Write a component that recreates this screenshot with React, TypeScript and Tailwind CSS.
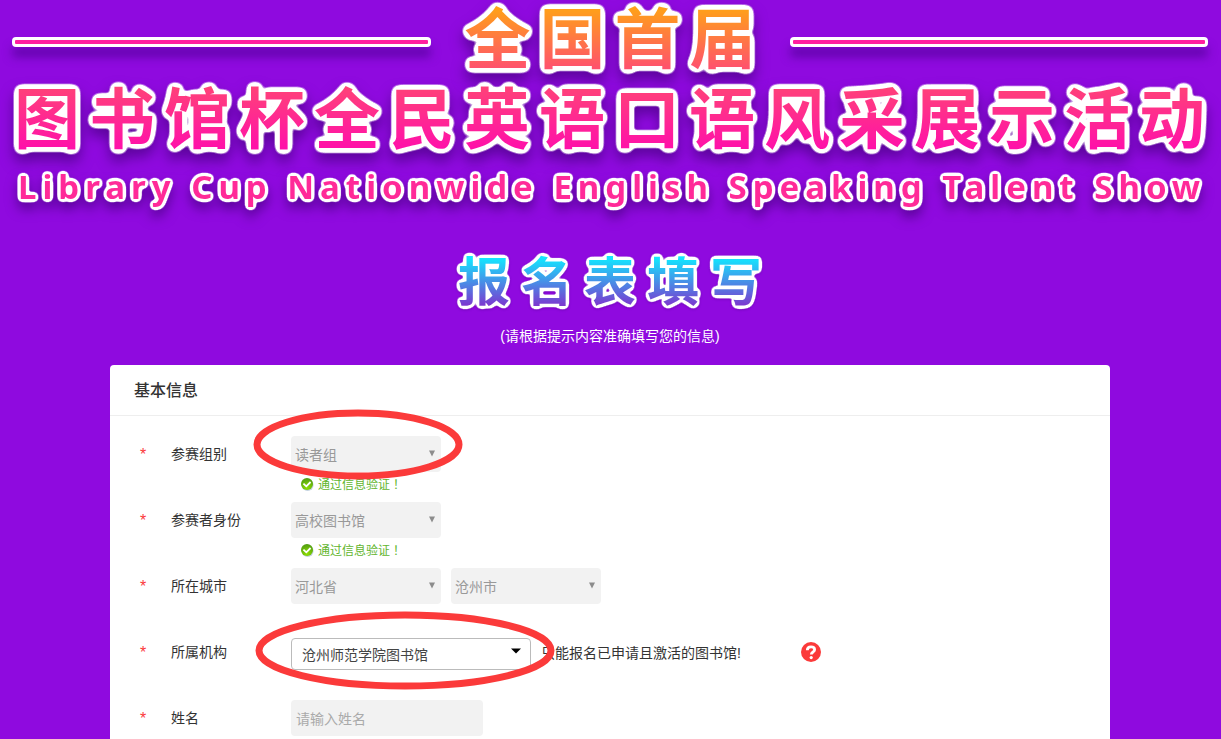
import React, { useState } from 'react';

interface FieldRowProps {
    id: string;
    label: string;
    message?: string;
    children: React.ReactNode;
}

interface LockedSelectProps {
    id: string;
    value: string;
    label?: string;
}

interface EllipseMarkProps {
    className: string;
    width: number;
    height: number;
}

interface OutlineFilterProps {
    id: string;
    spread: number;
    shadow: number;
    shadowOpacity: number;
}

// White outline: blur the glyph shape, then harden the edge far out
const OutlineFilter: React.FC<OutlineFilterProps> = ({ id, spread, shadow, shadowOpacity }) => (
    <filter id={id} x="-5%" y="-30%" width="110%" height="170%" colorInterpolationFilters="sRGB">
        <feGaussianBlur in="SourceAlpha" stdDeviation={spread} result="soft" />
        <feComponentTransfer in="soft" result="grown">
            <feFuncA type="linear" slope="16" intercept="-0.4" />
        </feComponentTransfer>
        <feFlood floodColor="#fff" />
        <feComposite in2="grown" operator="in" result="outline" />
        <feOffset in="grown" dy={shadow} />
        <feGaussianBlur stdDeviation={shadow * 0.8} result="shade" />
        <feFlood floodColor="#3a0070" floodOpacity={shadowOpacity} />
        <feComposite in2="shade" operator="in" result="shadow" />
        <feMerge>
            <feMergeNode in="shadow" />
            <feMergeNode in="outline" />
            <feMergeNode in="SourceGraphic" />
        </feMerge>
    </filter>
);

const TitleFilters: React.FC = () => (
    <svg className="absolute" width="0" height="0" aria-hidden="true">
        <defs>
            <OutlineFilter id="outline-large" spread={3} shadow={8} shadowOpacity={0.6} />
            <OutlineFilter id="outline-small" spread={2} shadow={7} shadowOpacity={0.6} />
            <OutlineFilter id="outline-flat" spread={2} shadow={1} shadowOpacity={0.3} />
        </defs>
    </svg>
);

const EllipseMark: React.FC<EllipseMarkProps> = ({ className, width, height }) => (
    <svg
        className={`pointer-events-none absolute z-10 max-w-none ${className}`}
        width={width}
        height={height}
        viewBox={`0 0 ${width} ${height}`}
        aria-hidden="true"
    >
        <ellipse
            cx={width / 2}
            cy={height / 2}
            rx={width / 2 - 4}
            ry={height / 2 - 4}
            fill="none"
            stroke="#fb3a3a"
            strokeWidth="7"
        />
    </svg>
);

const PassIcon: React.FC = () => (
    <svg className="h-[14px] w-[14px]" viewBox="0 0 14 14" aria-hidden="true">
        <defs>
            <radialGradient id="pass-fill" cx="0.5" cy="0.8" r="0.8">
                <stop offset="0" stopColor="#8fe000" />
                <stop offset="1" stopColor="#4f9a12" />
            </radialGradient>
        </defs>
        <circle cx="7.6" cy="8" r="6" fill="#c3d2e0" />
        <circle cx="7" cy="7" r="6" fill="url(#pass-fill)" />
        <path d="M3.4 6.6 L6.3 9.3 L10.6 5" fill="none" stroke="#fff" strokeWidth="1.8" />
    </svg>
);

const HelpIcon: React.FC = () => (
    <svg className="h-5 w-5" viewBox="0 0 20 20" aria-hidden="true">
        <circle cx="10" cy="10" r="10" fill="#fb3a3a" />
        <path
            d="M6.3 8.2 C6.3 5.9 8 4.9 10 4.9 C12.2 4.9 13.6 6 13.6 7.7 C13.6 9.8 10.3 9.9 10.3 12.6"
            fill="none"
            stroke="#fff"
            strokeWidth="2.8"
        />
        <circle cx="10.2" cy="15.6" r="1.6" fill="#fff" />
    </svg>
);

const FieldRow: React.FC<FieldRowProps> = ({ id, label, message, children }) => (
    <div className="group">
        <div className="flex h-9 items-center">
            <span className="w-[61px] shrink-0 pt-[2px] pl-[30px] text-base leading-5 text-[#fb3a3a]">*</span>
            <label htmlFor={id} className="w-[120px] shrink-0">{label}</label>
            <div className="flex items-center gap-[10px]">{children}</div>
        </div>
        <div className="flex h-[30px] items-start pl-[190px] group-last:hidden">
            {message && (
                <p className="flex h-6 items-center gap-1 text-xs text-[#62b52e]">
                    <PassIcon />
                    <span>
                        {message}
                        <span className="font-['Noto_Sans_CJK_TC',sans-serif]">！</span>
                    </span>
                </p>
            )}
        </div>
    </div>
);

const LockedSelect: React.FC<LockedSelectProps> = ({ id, value, label }) => (
    <div className="relative">
        <select
            id={id}
            aria-label={label}
            disabled
            className="block h-9 w-[150px] appearance-none rounded bg-[#f2f2f2] px-1 pt-[2px] text-sm text-[#999] opacity-100"
        >
            <option>{value}</option>
        </select>
        <svg className="pointer-events-none absolute top-[14px] right-[5px]" width="8" height="7" viewBox="0 0 8 7" aria-hidden="true">
            <path d="M1 0.5 H7 L4 6.5 Z" fill="#8c8c8c" />
        </svg>
    </div>
);

const Rule: React.FC = () => (
    <div className="mt-[3px] h-[10px] flex-1 rounded-[4px] border-[3px] border-white bg-[#ff1f9f] shadow-[0_10px_10px_#4a0090a0]" />
);

const Banner: React.FC = () => (
    <h1 className="mx-auto w-full max-w-[1200px] pt-[2px] font-bold whitespace-nowrap">
        <span className="flex h-[76px] items-center gap-[25px] px-[2px]">
            <Rule />
            <span className="[filter:url(#outline-large)]">
                <span className="block bg-linear-to-b/srgb from-[#ff9f1a] from-10% to-[#ff4f70] to-90% bg-clip-text pl-[9px] text-[66px] leading-[76px] tracking-[9px] text-transparent">
                    全国首届
                </span>
            </span>
            <Rule />
        </span>
        <span className="block [filter:url(#outline-large)]">
            <span className="block bg-linear-to-b/srgb from-[#ff4278] from-10% to-[#ff10aa] to-85% bg-clip-text pl-1 text-[66px] leading-[84px] tracking-[9px] text-transparent">
                图书馆杯全民英语口语风采展示活动
            </span>
        </span>
        <span className="block [filter:url(#outline-small)]">
            <span className="block bg-[#ff2a98] bg-clip-text pl-2 font-['Noto_Sans','Open_Sans',sans-serif] text-[33px] leading-[50px] tracking-[6px] text-transparent">
                Library Cup Nationwide English Speaking Talent Show
            </span>
        </span>
    </h1>
);

const App: React.FC = () => {
    const [name, setName] = useState('');

    return (
        <main className="flex min-h-screen flex-col bg-[#8f0adf] pr-px font-['Liberation_Sans','Noto_Sans_CJK_SC',sans-serif] text-sm text-[#333]">
            <TitleFilters />
            <Banner />

            <header className="pt-[35px] text-center text-white">
                <h2 className="[filter:url(#outline-flat)]">
                    <span className="block bg-linear-to-b/srgb from-[#12e8ff] from-15% to-[#7a3bd0] to-80% bg-clip-text pl-[11px] text-[52px] leading-[72px] font-bold tracking-[11px] text-transparent">
                        报名表填写
                    </span>
                </h2>
                <p className="mt-[6px] leading-[22px]">(请根据提示内容准确填写您的信息)</p>
            </header>

            <form className="mx-auto mt-[18px] w-full max-w-[1000px] grow rounded-t bg-white">
                <h3 className="border-b border-[#eee] px-6 pt-[2px] text-base leading-[48px] font-medium">基本信息</h3>
                <div className="pt-5">
                    <FieldRow id="group" label="参赛组别" message="通过信息验证">
                        <div className="relative">
                            <LockedSelect id="group" value="读者组" />
                            <EllipseMark className="-top-[27px] -left-[38px]" width={210} height={71} />
                        </div>
                    </FieldRow>
                    <FieldRow id="identity" label="参赛者身份" message="通过信息验证">
                        <LockedSelect id="identity" value="高校图书馆" />
                    </FieldRow>
                    <FieldRow id="province" label="所在城市">
                        <LockedSelect id="province" value="河北省" />
                        <LockedSelect id="city" value="沧州市" label="城市" />
                    </FieldRow>
                    <FieldRow id="library" label="所属机构">
                        <div className="relative mt-1">
                            <select
                                id="library"
                                className="block h-8 w-[240px] appearance-none rounded border border-[#bbb] bg-white px-[10px] pt-[2px] text-sm text-[#444]"
                            >
                                <option>沧州师范学院图书馆</option>
                            </select>
                            <svg className="pointer-events-none absolute top-[10px] right-[10px]" width="10" height="6" viewBox="0 0 10 6" aria-hidden="true">
                                <path d="M0 0.5 H10 L5 5.5 Z" fill="#000" />
                            </svg>
                            <EllipseMark className="-top-[27px] -left-9" width={300} height={79} />
                        </div>
                        <span className="w-[250px] pt-[2px]">只能报名已申请且激活的图书馆!</span>
                        <button type="button" aria-label="帮助">
                            <HelpIcon />
                        </button>
                    </FieldRow>
                    <FieldRow id="name" label="姓名">
                        <input
                            id="name"
                            type="text"
                            placeholder="请输入姓名"
                            value={name}
                            onChange={e => setName(e.target.value)}
                            className="h-9 w-48 rounded bg-[#f2f2f2] px-[5px] pt-[2px] text-sm placeholder:text-[#aaa]"
                        />
                    </FieldRow>
                </div>
            </form>
        </main>
    );
};

export default App;
